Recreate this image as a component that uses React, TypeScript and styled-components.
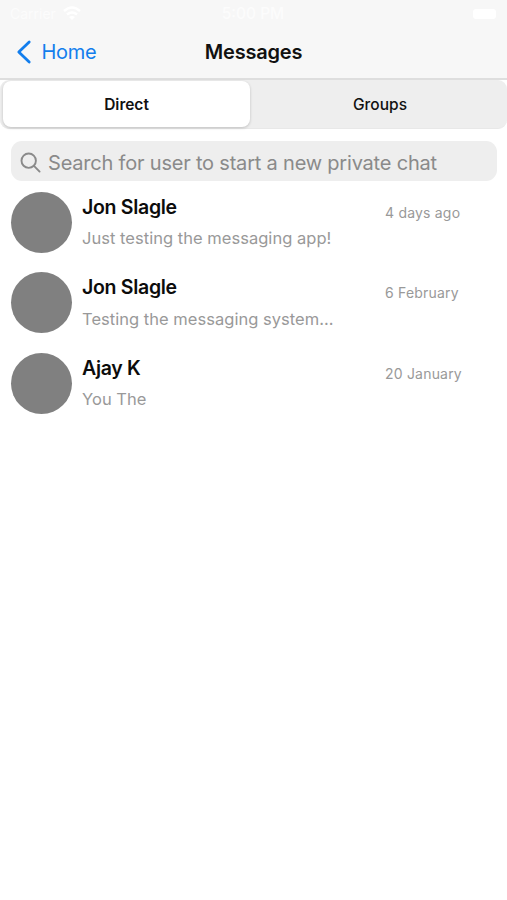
import React from 'react';
import styled, { createGlobalStyle } from 'styled-components';

const GlobalStyle = createGlobalStyle`
  * { box-sizing: border-box; }
  body {
    margin: 0;
    background: #fff;
    font-family: Inter, "Liberation Sans", sans-serif;
    -webkit-font-smoothing: antialiased;
  }
  button { border: 0; padding: 0; background: none; font: inherit; }
`;

const Screen = styled.div`
  width: 507px;
  height: 900px;
  overflow: hidden;
  background: #fff;
`;

const Header = styled.header`
  height: 80px;
  background: #f7f7f7;
  border-bottom: 2px solid #dedede;
`;

const StatusBar = styled.div`
  display: grid;
  grid-template-columns: 1fr auto 1fr;
  align-items: center;
  height: 27px;
  padding: 0 11px 0 10px;
  font-size: 16px;
  color: #fcfcfc;
`;

const Carrier = styled.div`
  display: flex;
  align-items: center;
  gap: 7px;
  font-size: 14px;
`;

const Clock = styled.div`
  font-weight: 500;
  font-size: 15.5px;
`;

const Battery = styled.div`
  justify-self: end;
  width: 23px;
  height: 10px;
  border-radius: 3px;
  background: #fff;
`;

const NavBar = styled.nav`
  display: grid;
  grid-template-columns: 1fr auto 1fr;
  align-items: center;
  height: 50px;
  padding: 0 16px;
`;

const BackButton = styled.button`
  display: flex;
  align-items: center;
  gap: 9.5px;
  color: #137eed;
  font-size: 20px;
  letter-spacing: -0.3px;
`;

const Title = styled.h1`
  margin: 0;
  font-size: 20px;
  font-weight: 600;
  letter-spacing: -0.2px;
  color: #111;
`;

const Segments = styled.div`
  display: grid;
  grid-template-columns: 247px 1fr;
  gap: 5px;
  height: 49px;
  padding: 1px 2px 1px 3px;
  border-radius: 9px;
  background: #eee;
  border-bottom: 1px solid #e8e8e8;
`;

const Segment = styled.button<{ $active?: boolean }>`
  border-radius: 8px;
  font-size: 15.5px;
  font-weight: ${p => (p.$active ? 600 : 500)};
  letter-spacing: ${p => (p.$active ? 0 : 0.05)}px;
  color: #111;
  background: ${p => (p.$active ? '#fff' : 'transparent')};
  box-shadow: ${p => (p.$active ? '0 1px 3px rgba(0, 0, 0, 0.2)' : 'none')};
`;

const SearchField = styled.div`
  display: flex;
  align-items: center;
  gap: 7px;
  height: 40px;
  margin: 12px 10px 0 11px;
  padding: 2px 0 0 9px;
  border-radius: 11px;
  background: #eee;
  color: #8a8a8a;
  font-size: 20px;
  white-space: nowrap;
`;

const Placeholder = styled.span`
  letter-spacing: -0.2px;
  padding-top: 1px;
`;

const ChatList = styled.main`
  display: flex;
  flex-direction: column;
  gap: 19px;
  padding: 10.5px 0 0 10.5px;
`;

const ChatRow = styled.article`
  display: grid;
  grid-template-columns: 61.5px 303px 1fr;
  height: 61.5px;
  white-space: nowrap;
`;

const Avatar = styled.div`
  width: 61px;
  height: 61px;
  border-radius: 50%;
  background: #808080;
`;

const Summary = styled.div`
  padding: 3px 0 0 10px;
`;

const Name = styled.div`
  height: 24px;
  line-height: 24px;
  font-size: 19.5px;
  font-weight: 600;
  letter-spacing: -0.3px;
  color: #0c0c0c;
`;

const Preview = styled.div`
  margin-top: 8.6px;
  line-height: 22px;
  font-size: 16.5px;
  letter-spacing: 0.03px;
  color: #999;
`;

const When = styled.time`
  padding: 11px 0 0 10px;
  font-size: 14px;
  line-height: 20px;
  letter-spacing: 0.2px;
  color: #999;
`;

const chats = [
  { name: 'Jon Slagle', preview: 'Just testing the messaging app!', when: '4 days ago' },
  { name: 'Jon Slagle', preview: 'Testing the messaging system...', when: '6 February' },
  { name: 'Ajay K', preview: 'You The', when: '20 January' },
];

export default function App() {
  return (
    <Screen>
      <GlobalStyle />
      <Header>
        <StatusBar>
          <Carrier>
            Carrier
            <svg width="18" height="15" viewBox="0 0 18 15" fill="none" stroke="#fff" strokeWidth="2.5">
              <path d="M1 5Q9-2 17 5M4 8.5q5-4 10 0" />
              <path d="M9 14l-3-3q3-2 6 0z" fill="#fff" stroke="none" />
            </svg>
          </Carrier>
          <Clock>5:00 PM</Clock>
          <Battery />
        </StatusBar>
        <NavBar>
          <BackButton>
            <svg width="16" height="26" viewBox="0 0 16 26" fill="none" stroke="currentColor" strokeWidth="2.8" strokeLinecap="round" strokeLinejoin="round">
              <path d="M13.2 3L2.8 13l10.4 10" />
            </svg>
            Home
          </BackButton>
          <Title>Messages</Title>
        </NavBar>
      </Header>
      <Segments>
        <Segment $active>Direct</Segment>
        <Segment>Groups</Segment>
      </Segments>
      <SearchField>
        <svg width="21" height="21" viewBox="0 0 21 21" fill="none" stroke="currentColor" strokeWidth="1.9" strokeLinecap="round">
          <circle cx="8.7" cy="8.7" r="7.2" />
          <path d="M14.2 14.2l5.4 5.4" />
        </svg>
        <Placeholder>Search for user to start a new private chat</Placeholder>
      </SearchField>
      <ChatList>
        {chats.map((chat, i) => (
          <ChatRow key={i}>
            <Avatar />
            <Summary>
              <Name>{chat.name}</Name>
              <Preview>{chat.preview}</Preview>
            </Summary>
            <When>{chat.when}</When>
          </ChatRow>
        ))}
      </ChatList>
    </Screen>
  );
}
